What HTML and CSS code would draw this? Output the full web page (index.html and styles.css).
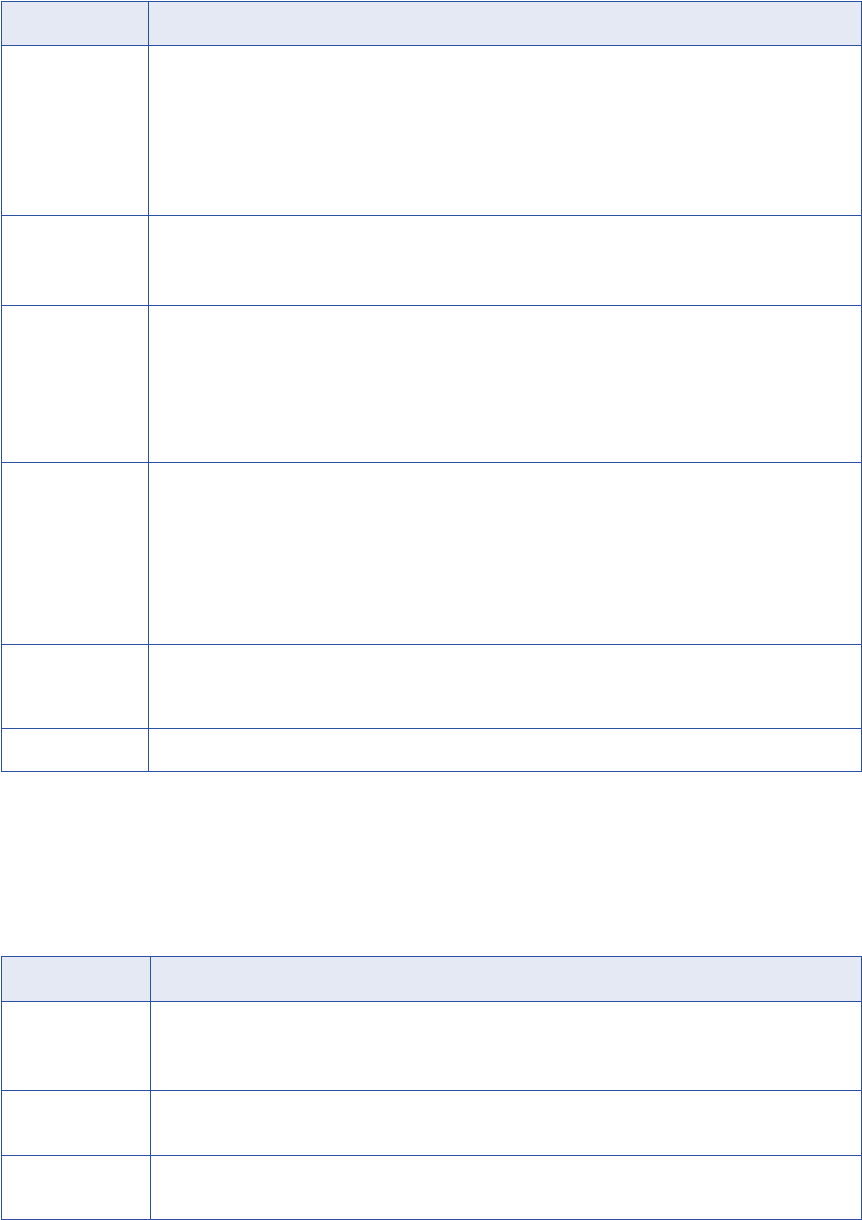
FILE: index.html
```html
<!DOCTYPE html>
<html lang="en">
<head>
    <meta charset="UTF-8">
    <meta name="viewport" content="width=device-width, initial-scale=1.0">
    <title>Tables</title>
    <link rel="stylesheet" href="styles.css">
</head>
<body>
    <div class="grid-table first">
        <div class="cell head h-44"></div><div class="cell head h-44"></div>
        <div class="cell h-170"></div><div class="cell h-170"></div>
        <div class="cell h-90"></div><div class="cell h-90"></div>
        <div class="cell h-157"></div><div class="cell h-157"></div>
        <div class="cell h-182"></div><div class="cell h-182"></div>
        <div class="cell h-84"></div><div class="cell h-84"></div>
        <div class="cell h-43"></div><div class="cell h-43"></div>
    </div>

    <div class="grid-table second">
        <div class="cell head h-45"></div><div class="cell head h-45"></div>
        <div class="cell h-89"></div><div class="cell h-89"></div>
        <div class="cell h-65"></div><div class="cell h-65"></div>
        <div class="cell h-64"></div><div class="cell h-64"></div>
    </div>
</body>
</html>
```

FILE: styles.css
```css
body {
    font-family: "Liberation Sans", Arial, sans-serif;
    margin: 0;
    padding: 1px 0 0 1px;
    background: #ffffff;
}
.grid-table {
    display: grid;
    width: 861px;
    box-sizing: border-box;
    border-top: 1px solid #2a50a4;
    border-left: 1px solid #2a50a4;
}
.grid-table.first {
    grid-template-columns: 147px 1fr;
}
.grid-table.second {
    grid-template-columns: 149px 1fr;
    margin-top: 184px;
}
.cell {
    box-sizing: border-box;
    border-right: 1px solid #2a50a4;
    border-bottom: 1px solid #2a50a4;
}
.head {
    background-color: #e4e9f4;
}
.h-43 { height: 43px; }
.h-44 { height: 44px; }
.h-45 { height: 45px; }
.h-64 { height: 64px; }
.h-65 { height: 65px; }
.h-84 { height: 84px; }
.h-89 { height: 89px; }
.h-90 { height: 90px; }
.h-157 { height: 157px; }
.h-170 { height: 170px; }
.h-182 { height: 182px; }
```
